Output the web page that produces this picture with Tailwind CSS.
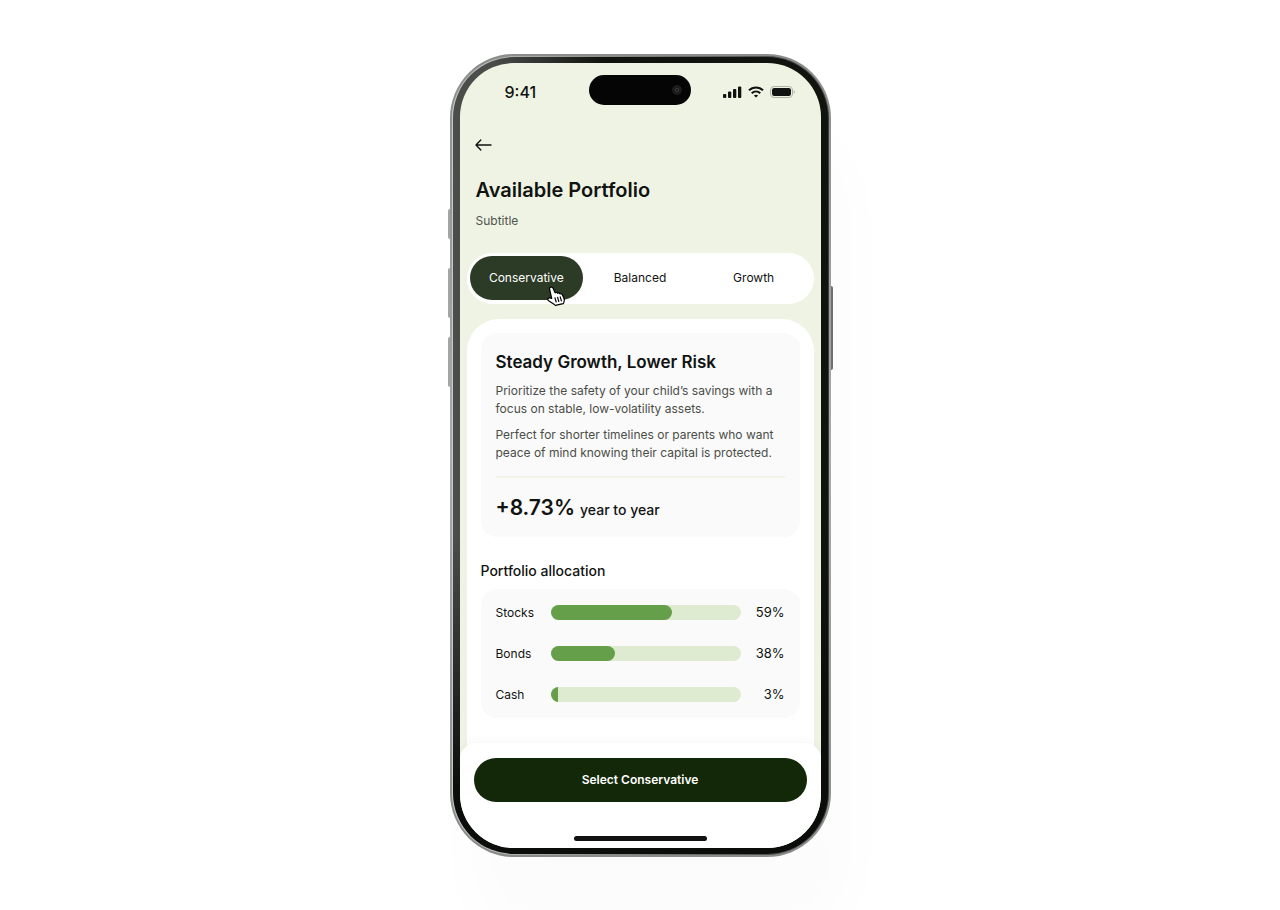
<!DOCTYPE html>
<html lang="en">
<head>
  <meta charset="UTF-8" />
  <meta name="viewport" content="width=device-width, initial-scale=1.0" />
  <title>Available Portfolio</title>
  <script src="https://cdn.jsdelivr.net/npm/@tailwindcss/browser@4"></script>
</head>
<body class="bg-white font-['Inter',sans-serif] text-[#111311]">
  <main class="min-h-screen flex items-center justify-center overflow-hidden">

    <!-- Phone -->
    <div class="relative w-full max-w-[381px] rounded-[64px] bg-linear-to-b from-[#8b8d8b] via-[#a9aaa9] to-[#8a8b8a] p-[2px] shadow-[20px_80px_60px_rgba(0,0,0,0.015)]">
      <!-- side buttons -->
      <span class="absolute -left-[2px] top-[155px] h-[30px] w-[2px] rounded-l bg-[#a3a5a3]"></span>
      <span class="absolute -left-[2px] top-[214px] h-[50px] w-[2px] rounded-l bg-[#a3a5a3]"></span>
      <span class="absolute -left-[2px] top-[283px] h-[50px] w-[2px] rounded-l bg-[#a3a5a3]"></span>
      <span class="absolute -right-[2px] top-[232px] h-[84px] w-[2px] rounded-r bg-[#6f706f]"></span>

      <div class="rounded-[62px] bg-linear-to-r from-[#c9cbc9] to-[#3c3d3c] p-px">
        <div class="rounded-[61px] bg-[linear-gradient(to_top,#0a0d09_8%,transparent_40%),linear-gradient(to_right,#4a4d4a,#4a4d4a_10%,#10140f_40%)] px-[7px] py-[6px]">

          <!-- Screen -->
          <div class="flex flex-col overflow-hidden rounded-[54px] bg-[#eff3e4]">

            <!-- Status bar -->
            <div class="mt-3 grid grid-cols-[1fr_102px_1fr] items-center">
              <span class="pt-1 pl-[45px] text-base leading-6 font-medium">9:41</span>
              <div class="flex h-[30px] items-center justify-end rounded-full bg-[#050505] pr-[9px]">
                <span class="flex size-[10px] items-center justify-center rounded-full bg-[#1c1c1c]">
                  <span class="size-1 rounded-full bg-[#050505] border border-[#444]"></span>
                </span>
              </div>
              <div class="flex items-center justify-end gap-[6px] pt-1 pr-[26px]">
                <svg class="h-3 w-[19px]" viewBox="0 0 19 12" fill="currentColor">
                  <rect x="0" y="8" width="3.300" height="4" rx="1" />
                  <rect x="5" y="5.5" width="3.300" height="6.5" rx="1" />
                  <rect x="10" y="3" width="3.300" height="9" rx="1" />
                  <rect x="15" y="0.5" width="3.300" height="11.5" rx="1" />
                </svg>
                <svg class="h-3 w-4" viewBox="0 0 16 12" fill="none" stroke="currentColor" stroke-width="2">
                  <path d="M1 4.4C4.9.6 11.100.6 15 4.400" />
                  <path d="M3.700 7.200c2.500-2.300 6.100-2.300 8.600 0" />
                  <path d="M8 11.600 5.800 9.400c1.300-1 3.100-1 4.400 0z" fill="currentColor" stroke="none" />
                </svg>
                <svg class="h-3 w-[25px]" viewBox="0 0 25 12" fill="none">
                  <rect x=".5" y=".5" width="22" height="11" rx="3.500" stroke="#b1b4aa" />
                  <rect x="2" y="2" width="19" height="8" rx="2.200" fill="#111311" />
                  <path d="M23.700 4.200v3.600c1.300-.7 1.300-2.900 0-3.600z" fill="#9da197" />
                </svg>
              </div>
            </div>

            <!-- Header -->
            <header class="mt-7 px-4">
              <a href="#" aria-label="Back" class="-ml-px flex h-6 w-6 items-center">
                <svg class="h-3 w-[17px]" viewBox="0 0 17 12" fill="none" stroke="currentColor" stroke-width="1.400" stroke-linecap="round" stroke-linejoin="round">
                  <path d="M16 6H1M5.800 1 1 6l4.800 5" />
                </svg>
              </a>
              <h1 class="mt-[17px] text-[20px] leading-8 font-semibold">Available Portfolio</h1>
              <p class="mt-[5px] text-[12px] leading-5 text-[#51544d]">Subtitle</p>
            </header>

            <!-- Tabs -->
            <div role="tablist" class="mx-[7px] mt-[22px] grid grid-cols-3 rounded-full bg-white px-[3px] pt-[3px] pb-1 text-[12px]">
              <button role="tab" aria-selected="true" class="relative h-11 rounded-full bg-[#2b3b25] text-white">
                Conservative
                <!-- pointer -->
                <svg class="absolute top-[30px] left-[77px] h-5 w-[18px]" viewBox="0 0 18 20" fill="#fff" stroke="#000" stroke-width="1.200" stroke-linejoin="round" stroke-linecap="round">
                  <path d="M3.600 1.300c1-.5 2-.1 2.500.9l2 4.600c.9-.6 2-.3 2.500.5.900-.5 1.900-.2 2.400.6 1-.4 2.100.1 2.500 1.100l1.400 3.300c.6 1.600.5 2.700-.1 4.100l-.6 1.300-7.900 1.700-1.700-1.500-5-3.200c-1.400-1.100-.5-3 1.200-2.700l1.900.5L2.700 3.700c-.4-1 0-2 .9-2.400z" />
                  <path d="M8 11.800l1.200 4.200M10.600 11.400l1.200 4.100M13.200 10.900l1.200 4" fill="none" />
                </svg>
              </button>
              <button role="tab" aria-selected="false" class="h-11 rounded-full">Balanced</button>
              <button role="tab" aria-selected="false" class="h-11 rounded-full">Growth</button>
            </div>

            <!-- Portfolio details -->
            <section class="mx-[7px] mt-[15px] rounded-t-[32px] bg-white px-[14px] pt-[14px] pb-[33px]">
              <div class="rounded-2xl bg-[#fafafa] px-[15px] pt-4 pb-[11px]">
                <h2 class="text-[17px] leading-[26px] font-semibold">Steady Growth, Lower Risk</h2>
                <div class="mt-[7px] space-y-2 text-[12px] leading-[18px] whitespace-nowrap text-[#4a4d47]">
                  <p>Prioritize the safety of your child’s savings with a<br />focus on stable, low-volatility assets.</p>
                  <p>Perfect for shorter timelines or parents who want<br />peace of mind knowing their capital is protected.</p>
                </div>
                <p class="mt-[14px] flex items-baseline gap-[5px] border-t-2 border-[#f1f4e7] pt-[14px] leading-8">
                  <span class="text-[21px] font-semibold">+8.73%</span>
                  <span class="text-[14px] font-medium">year to year</span>
                </p>
              </div>

              <h3 class="mt-6 text-[14px] leading-5 font-medium">Portfolio allocation</h3>
              <ul class="mt-2 flex flex-col gap-5 rounded-2xl bg-[#fafafa] px-[15px] py-[13px] text-[13px] leading-[21px]">
                <li class="grid grid-cols-[55px_1fr_44px] items-center">
                  <span class="text-[12px]">Stocks</span>
                  <div class="h-[15px] overflow-hidden rounded-full bg-[#deebd1]">
                    <div class="h-full rounded-r-full bg-[#659f4a]" style="width: 64%"></div>
                  </div>
                  <span class="text-right">59%</span>
                </li>
                <li class="grid grid-cols-[55px_1fr_44px] items-center">
                  <span class="text-[12px]">Bonds</span>
                  <div class="h-[15px] overflow-hidden rounded-full bg-[#deebd1]">
                    <div class="h-full rounded-r-full bg-[#659f4a]" style="width: 34%"></div>
                  </div>
                  <span class="text-right">38%</span>
                </li>
                <li class="grid grid-cols-[55px_1fr_44px] items-center">
                  <span class="text-[12px]">Cash</span>
                  <div class="h-[15px] overflow-hidden rounded-full bg-[#deebd1]">
                    <div class="h-full bg-[#659f4a]" style="width: 4%"></div>
                  </div>
                  <span class="text-right">3%</span>
                </li>
              </ul>
            </section>

            <!-- Bottom bar -->
            <footer class="relative -mt-2 flex flex-col items-center rounded-t-2xl bg-white px-[14px] pt-[15px] pb-[7px] shadow-[0_-2px_8px_rgba(0,0,0,0.04)]">
              <button class="h-11 w-full rounded-full bg-[#122808] text-[12px] font-semibold text-white">Select Conservative</button>
              <span class="mt-[34px] h-[5px] w-[133px] rounded-full bg-[#111]"></span>
            </footer>
          </div>
        </div>
      </div>
    </div>

  </main>
</body>
</html>
